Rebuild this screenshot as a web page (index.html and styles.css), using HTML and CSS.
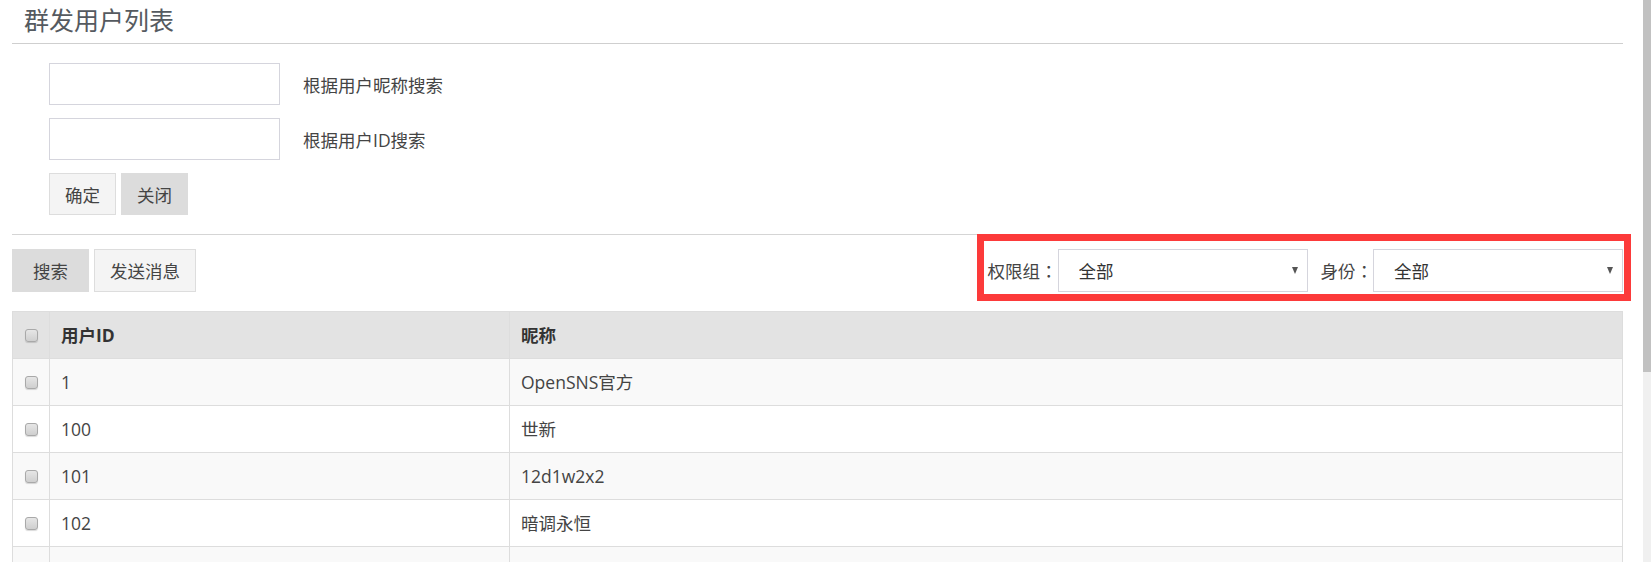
FILE: index.html
```html
<!DOCTYPE html>
<html lang="zh-CN">

  <head>
    <meta charset="UTF-8">
    <meta name="viewport" content="width=device-width, initial-scale=1.0">
    <title>群发用户列表</title>

    <link rel="stylesheet" href="styles.css">

  </head>

  <body>

    <div class="main">

      <div class="main__title">
        <h2>群发用户列表</h2>
      </div>

      <div class="search__box">
        <div class="search__row">
          <input type="text" class="text__input" name="nickname">
          <span class="search__tip">根据用户昵称搜索</span>
        </div>
        <div class="search__row">
          <input type="text" class="text__input" name="uid">
          <span class="search__tip">根据用户ID搜索</span>
        </div>
        <div class="search__row">
          <button class="btn">确定</button>
          <button class="btn btn--gray">关闭</button>
        </div>
      </div>

      <div class="tool__bar">
        <div class="tool__left">
          <button class="btn btn--gray btn--wide">搜索</button>
          <button class="btn">发送消息</button>
        </div>
        <div class="tool__right">
          <span class="filter__label" lang="zh-TW">权限组：</span>
          <div class="select__wrap">
            <select name="group">
              <option>全部</option>
            </select>
          </div>
          <span class="filter__label filter__label--gap" lang="zh-TW">身份：</span>
          <div class="select__wrap">
            <select name="role">
              <option>全部</option>
            </select>
          </div>
          <div class="mark__box"></div>
        </div>
      </div>

      <table class="user__table">
        <thead>
          <tr>
            <th class="col__check"><input type="checkbox" class="check"></th>
            <th class="col__id">用户ID</th>
            <th>昵称</th>
          </tr>
        </thead>
        <tbody>
          <tr><td class="col__check"><input type="checkbox" class="check"></td><td>1</td><td>OpenSNS官方</td></tr>
          <tr><td class="col__check"><input type="checkbox" class="check"></td><td>100</td><td>世新</td></tr>
          <tr><td class="col__check"><input type="checkbox" class="check"></td><td>101</td><td>12d1w2x2</td></tr>
          <tr><td class="col__check"><input type="checkbox" class="check"></td><td>102</td><td>暗调永恒</td></tr>
          <tr><td class="col__check"></td><td></td><td></td></tr>
        </tbody>
      </table>

    </div>

    <div class="scroll__bar">
      <div class="scroll__thumb"></div>
    </div>

  </body>

</html>
```

FILE: styles.css
```css
* {
  margin: 0;
  padding: 0;
  box-sizing: border-box;
}

body {
  background-color: #ffffff;
  font-family: "Open Sans", "Noto Sans CJK SC", sans-serif;
  font-size: 17.5px;
  color: #444;
  height: 100vh;
  overflow: hidden;
}

.main {
  padding: 0 28px 0 12px;
}

.main__title {
  height: 44px;
  border-bottom: 1px solid #cfcfcf;
}

.main__title h2 {
  padding-left: 12px;
  font-size: 25px;
  font-weight: 400;
  line-height: 40px;
  color: #555a60;
}

.search__box {
  display: flex;
  flex-direction: column;
  gap: 13px;
  padding: 19px 0 19px 37px;
  border-bottom: 1px solid #d5d5d5;
}

.search__row {
  display: flex;
  align-items: center;
  gap: 5px;
}

.text__input {
  width: 231px;
  height: 42px;
  border: 1px solid #d5d5dd;
  background-color: #fff;
}

.search__tip {
  margin-left: 18px;
  color: #444;
}

.btn {
  height: 42px;
  padding: 0 15px;
  border: 1px solid #dddddd;
  background-color: #f4f4f4;
  font-family: inherit;
  font-size: 17.5px;
  color: #444;
}

.btn--gray {
  background-color: #dcdcdc;
  border-color: #dcdcdc;
}

.btn--wide {
  padding: 0 20px;
}

.tool__bar {
  display: flex;
  justify-content: space-between;
  align-items: center;
  margin-top: 14px;
  height: 43px;
}

.tool__left {
  display: flex;
  gap: 5px;
}

.tool__left .btn {
  height: 43px;
}

.tool__right {
  position: relative;
  display: flex;
  align-items: center;
}

.filter__label {
  font-family: "Open Sans", "Noto Sans CJK TC", sans-serif;
  color: #444;
}

.filter__label--gap {
  margin-left: 13px;
}

.select__wrap {
  position: relative;
  width: 250px;
  height: 43px;
}

.select__wrap select {
  appearance: none;
  width: 100%;
  height: 100%;
  padding-left: 20px;
  border: 1px solid #d5d5dd;
  border-radius: 0;
  background-color: #fff;
  font-family: inherit;
  font-size: 17.5px;
  color: #333;
}

.select__wrap::after {
  content: "";
  position: absolute;
  right: 10px;
  top: 18px;
  border-left: 3.5px solid transparent;
  border-right: 3.5px solid transparent;
  border-top: 7px solid #555;
}

/* red annotation frame around the filters */
.mark__box {
  position: absolute;
  left: -11px;
  top: -15px;
  right: -8px;
  bottom: -9px;
  border: 7px solid #fc3a3a;
  pointer-events: none;
}

.user__table {
  width: 100%;
  margin-top: 19px;
  border-collapse: collapse;
  border: 1px solid #dddddd;
}

.user__table th,
.user__table td {
  height: 47px;
  padding: 0 11px;
  border: 1px solid #dddddd;
  text-align: left;
  line-height: 25px;
}

.user__table th {
  background-color: #e3e3e3;
  font-weight: 700;
  color: #333;
}

.user__table tbody tr:nth-of-type(odd) {
  background-color: #f9f9f9;
}

.user__table .col__check {
  width: 37px;
  padding: 0;
  text-align: center;
}

.user__table .col__id {
  width: 460px;
}

.check {
  appearance: none;
  display: block;
  margin: 0 auto;
  width: 13px;
  height: 13px;
  border: 1px solid #a9a9a9;
  border-radius: 3px;
  background: linear-gradient(#e6e6e6, #cfcfcf);
  box-shadow: 0 1px 1px rgba(0, 0, 0, 0.15);
}

/* window scrollbar as seen in the capture */
.scroll__bar {
  position: fixed;
  top: 0;
  right: 0;
  width: 8px;
  height: 100%;
  background-color: #f0f0f0;
}

.scroll__thumb {
  height: 372px;
  background-color: #c1c1c1;
}
```
